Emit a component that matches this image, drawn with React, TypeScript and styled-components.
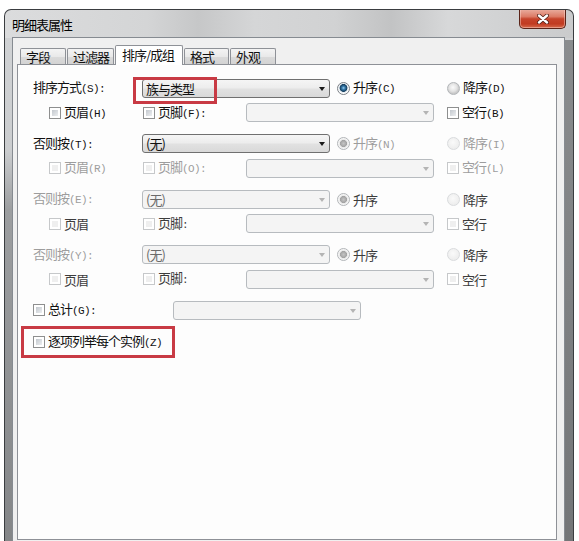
import * as React from "react";
import styled, { createGlobalStyle, css } from "styled-components";

const GlobalStyle = createGlobalStyle`
  html, body {
    margin: 0;
    padding: 0;
    background: #fff;
    overflow: hidden;
  }
  body {
    font-family: "Noto Sans CJK SC", "Noto Sans", sans-serif;
    font-size: 13px;
    color: #111;
  }
`;

type Tone = "on" | "mute" | "off";
type RadioState = "on" | "set" | "idle" | "off";

const toneColor = (t: Tone = "on") =>
  t === "off" ? "#9d9d9d" : t === "mute" ? "#3c3c3c" : "#111";

// -------------------- Window frame --------------------

const Window = styled.div`
  box-sizing: border-box;
  margin: 9px 0 0 4px;
  width: 570px;
  height: 532px;
  overflow: hidden;
  border: 1px solid #3a3d40;
  border-bottom: none;
  border-radius: 7px 7px 0 0;
  padding: 0 8px 0 7px;
  display: flex;
  flex-direction: column;
  background:
    linear-gradient(#8a8c8e, #727476) right 0 top 30px / 8px 100% no-repeat,
    linear-gradient(
        90deg,
        #dbdcdd 0%,
        #d4d5d6 25%,
        #c6c7c8 34%,
        #d5d6d7 44%,
        #d1d2d3 58%,
        #c2c3c4 68%,
        #d7d8d9 78%,
        #cacbcc 100%
      )
      0 0 / 100% 28px no-repeat,
    linear-gradient(#d1d3d5 0, #cbcdcf 140px, #9c9ea0 200px, #848688 100%);
`;

const TitleBar = styled.div`
  height: 27px;
  flex: none;
  display: flex;
  align-items: center;
  justify-content: space-between;
`;

const Title = styled.span`
  font-size: 13px;
  letter-spacing: -1px;
  color: #000;
  padding-top: 1px;
`;

const CloseButton = styled.div`
  align-self: flex-start;
  margin: -1px -1px 0 0;
  box-sizing: border-box;
  width: 47px;
  height: 20px;
  border: 1px solid #5b2419;
  border-top: none;
  border-radius: 0 0 5px 5px;
  background: linear-gradient(
    #eab0a2 0%,
    #dc7b66 40%,
    #c6442c 52%,
    #c13b21 78%,
    #d66a4c 100%
  );
  box-shadow: inset 0 0 0 1px rgba(255, 220, 210, 0.45);
  display: flex;
  align-items: center;
  justify-content: center;
`;

const Client = styled.div`
  flex: 1;
  min-height: 0;
  border: 1px solid #868b91;
  border-bottom: none;
  background: #f0f0f0;
  padding: 7px 7px 0 4px;
`;

// -------------------- Tabs --------------------

const TabStrip = styled.div`
  display: flex;
  align-items: flex-end;
  height: 19px;
  padding-left: 3px;
  gap: 1px;
  position: relative;
  z-index: 1;
`;

const Tab = styled.div<{ $w: number; $active?: boolean }>`
  box-sizing: border-box;
  width: ${(p) => p.$w}px;
  height: 16px;
  border: 1px solid #8e9197;
  border-bottom: none;
  border-radius: 2px 2px 0 0;
  padding-left: 5px;
  line-height: 16px;
  letter-spacing: -1px;
  white-space: nowrap;
  color: #111;
  background: linear-gradient(#f4f4f4, #e9e9e9 50%, #dadada 55%, #d3d3d3);
  ${(p) =>
    p.$active &&
    css`
      height: 20px;
      margin-bottom: -1px;
      padding-left: 6px;
      line-height: 18px;
      background: #fff;
    `}
`;

const Panel = styled.div`
  box-sizing: border-box;
  height: 476px;
  border: 1px solid #8e9197;
  background: #fdfdfd;
  padding: 13px 0 0 15px;
`;

// -------------------- Rows --------------------

const Group = styled.div`
  display: flex;
  flex-direction: column;
  gap: 4.5px;
  margin-bottom: 11px;
`;

const Row = styled.div<{ $indent?: number; $top?: number }>`
  display: flex;
  align-items: center;
  height: 20px;
  padding-left: ${(p) => p.$indent ?? 0}px;
  margin-top: ${(p) => p.$top ?? 0}px;
`;

const Cell = styled.div<{ $w?: number }>`
  display: flex;
  align-items: center;
  flex: none;
  width: ${(p) => (p.$w ? `${p.$w}px` : "auto")};
`;

const Text = styled.span<{ $tone?: Tone }>`
  color: ${(p) => toneColor(p.$tone)};
  white-space: nowrap;
  line-height: 15px;
  letter-spacing: -1px;
`;

// half-width accelerator marks, as the dialog font draws them
const Accel = styled.span`
  font-family: "Liberation Mono", monospace;
  font-size: 11px;
  letter-spacing: -0.6px;
`;

const Combo = styled.div<{ $w: number; $off?: boolean }>`
  position: relative;
  box-sizing: border-box;
  width: ${(p) => p.$w}px;
  height: 19px;
  border: 1px solid ${(p) => (p.$off ? "#b7bbbf" : "#707070")};
  border-radius: 3px;
  background: ${(p) =>
    p.$off
      ? "#f4f4f4"
      : "linear-gradient(#f5f5f5, #ededed 45%, #e1e1e1 55%, #d9d9d9)"};
  display: flex;
  align-items: center;
  justify-content: space-between;
  padding: 0 4px 0 3px;
  color: ${(p) => (p.$off ? "#6a6a6a" : "#111")};
`;

const Arrow = styled.span<{ $off?: boolean }>`
  width: 0;
  height: 0;
  border-left: 3.5px solid transparent;
  border-right: 3.5px solid transparent;
  border-top: 4px solid ${(p) => (p.$off ? "#b4b4b4" : "#1a1a1a")};
  margin-top: 1px;
`;

const Highlight = styled.div`
  position: absolute;
  left: -10px;
  top: -3px;
  width: 84px;
  height: 27px;
  box-sizing: border-box;
  border: 3px solid #c83a44;
  pointer-events: none;
`;

const Box = styled.span<{ $off?: boolean }>`
  box-sizing: border-box;
  flex: none;
  width: 12px;
  height: 12px;
  margin-right: 3px;
  padding: 2px;
  border: 1px solid ${(p) => (p.$off ? "#c6c8ca" : "#8e8f8f")};
  background: #fff;
  &::after {
    content: "";
    display: block;
    width: 100%;
    height: 100%;
    background: ${(p) =>
      p.$off ? "#efefef" : "linear-gradient(135deg, #c3c8ce, #eceef0)"};
  }
`;

const radioFill: Record<RadioState, string> = {
  on: "radial-gradient(circle at 50% 45%, #9fd0ee 0, #3a7fb0 1.5px, #1c4d72 3px, #17405f 3.6px, #dfe6ec 4.2px, #ffffff 5.5px)",
  set: "radial-gradient(circle, #c4c4c4 0, #a3a3a3 3.2px, #e7e7e7 3.8px, #fafafa 5.5px)",
  idle: "radial-gradient(circle at 45% 40%, #fbfbfb 0, #e2e2e2 4px, #c9c9c9 6px)",
  off: "radial-gradient(circle at 45% 40%, #fafafa 0, #eeeeee 6px)",
};

const Radio = styled.span<{ $state: RadioState }>`
  box-sizing: border-box;
  flex: none;
  width: 13px;
  height: 13px;
  margin-right: 3px;
  border-radius: 50%;
  border: 1px solid
    ${(p) =>
      p.$state === "on" ? "#7a7f85" : p.$state === "off" ? "#d9dbdd" : "#b2b5b8"};
  background: ${(p) => radioFill[p.$state]};
`;

const Callout = styled.div`
  box-sizing: border-box;
  display: flex;
  align-items: center;
  width: 154px;
  height: 32px;
  margin: 6px 0 0 -12px;
  padding-left: 9px;
  border: 3px solid #c83a44;
`;

// -------------------- Data --------------------

interface SortGroup {
  label: string;
  labelKey: string;
  labelTone: Tone;
  value: string;
  valueOff?: boolean;
  highlight?: boolean;
  ascKey: string;
  ascTone: Tone;
  ascState: RadioState;
  descKey: string;
  descTone: Tone;
  descState: RadioState;
  headKey: string;
  footKey: string;
  blankKey: string;
  subTone: Tone;
  boxOff?: boolean;
}

const groups: SortGroup[] = [
  {
    label: "排序方式",
    labelKey: "(S):",
    labelTone: "on",
    value: "族与类型",
    highlight: true,
    ascKey: "(C)",
    ascTone: "on",
    ascState: "on",
    descKey: "(D)",
    descTone: "on",
    descState: "idle",
    headKey: "(H)",
    footKey: "(F):",
    blankKey: "(B)",
    subTone: "on",
  },
  {
    label: "否则按",
    labelKey: "(T):",
    labelTone: "on",
    value: "(无)",
    ascKey: "(N)",
    ascTone: "off",
    ascState: "set",
    descKey: "(I)",
    descTone: "off",
    descState: "off",
    headKey: "(R)",
    footKey: "(O):",
    blankKey: "(L)",
    subTone: "off",
    boxOff: true,
  },
  {
    label: "否则按",
    labelKey: "(E):",
    labelTone: "off",
    value: "(无)",
    valueOff: true,
    ascKey: "",
    ascTone: "mute",
    ascState: "set",
    descKey: "",
    descTone: "mute",
    descState: "off",
    headKey: "",
    footKey: ":",
    blankKey: "",
    subTone: "mute",
    boxOff: true,
  },
  {
    label: "否则按",
    labelKey: "(Y):",
    labelTone: "off",
    value: "(无)",
    valueOff: true,
    ascKey: "",
    ascTone: "mute",
    ascState: "set",
    descKey: "",
    descTone: "mute",
    descState: "off",
    headKey: "",
    footKey: ":",
    blankKey: "",
    subTone: "mute",
    boxOff: true,
  },
];

const tabs = [
  { name: "字段", w: 46 },
  { name: "过滤器", w: 47 },
  { name: "排序/成组", w: 68, active: true },
  { name: "格式", w: 45 },
  { name: "外观", w: 46 },
];

// -------------------- Pieces --------------------

const CloseGlyph = () => (
  <svg width="12" height="10" viewBox="0 0 12 10">
    <path
      d="M2 1.5 L10 8.5 M10 1.5 L2 8.5"
      stroke="#4a1a12"
      strokeWidth="3.8"
      strokeLinecap="round"
    />
    <path
      d="M2 1.5 L10 8.5 M10 1.5 L2 8.5"
      stroke="#fff"
      strokeWidth="2.4"
      strokeLinecap="round"
    />
  </svg>
);

const Caption = (props: { text: string; accel?: string; tone?: Tone }) => (
  <Text $tone={props.tone}>
    {props.text}
    {props.accel && <Accel>{props.accel}</Accel>}
  </Text>
);

const DropDown = (props: {
  w: number;
  value?: string;
  off?: boolean;
  highlight?: boolean;
}) => (
  <Combo $w={props.w} $off={props.off}>
    <Text style={{ color: "inherit" }}>{props.value}</Text>
    <Arrow $off={props.off} />
    {props.highlight && <Highlight />}
  </Combo>
);

const SortBlock = ({ g }: { g: SortGroup }) => (
  <Group>
    <Row>
      <Cell $w={109}>
        <Caption text={g.label} accel={g.labelKey} tone={g.labelTone} />
      </Cell>
      <DropDown w={188} value={g.value} off={g.valueOff} highlight={g.highlight} />
      <Cell $w={7} />
      <Cell $w={110}>
        <Radio $state={g.ascState} />
        <Caption text="升序" accel={g.ascKey} tone={g.ascTone} />
      </Cell>
      <Cell>
        <Radio $state={g.descState} />
        <Caption text="降序" accel={g.descKey} tone={g.descTone} />
      </Cell>
    </Row>
    <Row $indent={16}>
      <Cell $w={94}>
        <Box $off={g.boxOff} />
        <Caption text="页眉" accel={g.headKey} tone={g.subTone} />
      </Cell>
      <Cell $w={103}>
        <Box $off={g.boxOff} />
        <Caption text="页脚" accel={g.footKey} tone={g.subTone} />
      </Cell>
      <DropDown w={188} off />
      <Cell $w={13} />
      <Cell>
        <Box $off={g.boxOff} />
        <Caption text="空行" accel={g.blankKey} tone={g.subTone} />
      </Cell>
    </Row>
  </Group>
);

export default function App() {
  return (
    <>
      <GlobalStyle />
      <Window>
        <TitleBar>
          <Title>明细表属性</Title>
          <CloseButton>
            <CloseGlyph />
          </CloseButton>
        </TitleBar>
        <Client>
          <TabStrip>
            {tabs.map((t) => (
              <Tab key={t.name} $w={t.w} $active={t.active}>
                {t.name}
              </Tab>
            ))}
          </TabStrip>
          <Panel>
            {groups.map((g, i) => (
              <SortBlock key={i} g={g} />
            ))}
            <Row $top={2}>
              <Cell $w={140}>
                <Box />
                <Caption text="总计" accel="(G):" />
              </Cell>
              <DropDown w={188} off />
            </Row>
            <Callout>
              <Box />
              <Caption text="逐项列举每个实例" accel="(Z)" />
            </Callout>
          </Panel>
        </Client>
      </Window>
    </>
  );
}
